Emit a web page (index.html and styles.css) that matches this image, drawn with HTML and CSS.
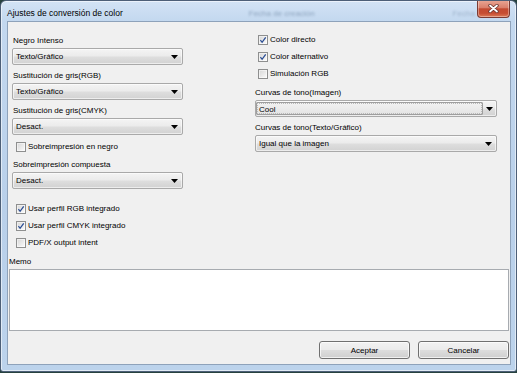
FILE: index.html
```html
<!DOCTYPE html>
<html lang="es">
<head>
    <meta charset="UTF-8">
    <title>Ajustes de conversión de color</title>
    <link rel="stylesheet" href="styles.css">
</head>
<body>
    <div class="window">
        <div class="titlebar">
            <span class="title">Ajustes de conversión de color</span>
            <span class="ghost">Fecha de creación</span>
            <span class="ghost ghost-right">Fecha</span>
            <button class="close-btn" aria-label="Cerrar">
                <svg width="11" height="9" viewBox="0 0 11 9">
                    <path d="M2 1.5 L9 7.5 M9 1.5 L2 7.5" stroke="#6b3530" stroke-width="3.4" stroke-linecap="round"/>
                    <path d="M2 1.5 L9 7.5 M9 1.5 L2 7.5" stroke="#ffffff" stroke-width="1.7" stroke-linecap="round"/>
                </svg>
            </button>
        </div>

        <div class="client">
            <div class="columns">
                <!-- Left column -->
                <div class="col-left">
                    <div class="field">
                        <span class="field-label">Negro Intenso</span>
                        <div class="select"><span class="value">Texto/Gráfico</span><svg class="arrow" width="7" height="4" viewBox="0 0 7 4"><path d="M0 0 H7 L3.5 4 Z" fill="#000"/></svg></div>
                    </div>
                    <div class="field">
                        <span class="field-label">Sustitución de gris(RGB)</span>
                        <div class="select"><span class="value">Texto/Gráfico</span><svg class="arrow" width="7" height="4" viewBox="0 0 7 4"><path d="M0 0 H7 L3.5 4 Z" fill="#000"/></svg></div>
                    </div>
                    <div class="field">
                        <span class="field-label">Sustitución de gris(CMYK)</span>
                        <div class="select"><span class="value">Desact.</span><svg class="arrow" width="7" height="4" viewBox="0 0 7 4"><path d="M0 0 H7 L3.5 4 Z" fill="#000"/></svg></div>
                    </div>
                    <div class="check overprint">
                        <span class="box"></span>Sobreimpresión en negro
                    </div>
                    <div class="field after-check">
                        <span class="field-label">Sobreimpresión compuesta</span>
                        <div class="select"><span class="value">Desact.</span><svg class="arrow" width="7" height="4" viewBox="0 0 7 4"><path d="M0 0 H7 L3.5 4 Z" fill="#000"/></svg></div>
                    </div>
                    <div class="check first-profile">
                        <span class="box checked"><svg width="8" height="8" viewBox="0 0 8 8"><path d="M1.4 4.2 L3.1 6.3 L6.7 1.4" fill="none" stroke="#2c4f95" stroke-width="1.3"/></svg></span>Usar perfil RGB integrado
                    </div>
                    <div class="check">
                        <span class="box checked"><svg width="8" height="8" viewBox="0 0 8 8"><path d="M1.4 4.2 L3.1 6.3 L6.7 1.4" fill="none" stroke="#2c4f95" stroke-width="1.3"/></svg></span>Usar perfil CMYK integrado
                    </div>
                    <div class="check">
                        <span class="box"></span>PDF/X output intent
                    </div>
                </div>

                <!-- Right column -->
                <div class="col-right">
                    <div class="check">
                        <span class="box checked"><svg width="8" height="8" viewBox="0 0 8 8"><path d="M1.4 4.2 L3.1 6.3 L6.7 1.4" fill="none" stroke="#2c4f95" stroke-width="1.3"/></svg></span>Color directo
                    </div>
                    <div class="check">
                        <span class="box checked"><svg width="8" height="8" viewBox="0 0 8 8"><path d="M1.4 4.2 L3.1 6.3 L6.7 1.4" fill="none" stroke="#2c4f95" stroke-width="1.3"/></svg></span>Color alternativo
                    </div>
                    <div class="check">
                        <span class="box"></span>Simulación RGB
                    </div>
                    <div class="field tone">
                        <span class="field-label">Curvas de tono(Imagen)</span>
                        <div class="select combo"><span class="value edit">Cool</span><svg class="arrow" width="7" height="4" viewBox="0 0 7 4"><path d="M0 0 H7 L3.5 4 Z" fill="#000"/></svg></div>
                    </div>
                    <div class="field">
                        <span class="field-label">Curvas de tono(Texto/Gráfico)</span>
                        <div class="select"><span class="value">Igual que la imagen</span><svg class="arrow" width="7" height="4" viewBox="0 0 7 4"><path d="M0 0 H7 L3.5 4 Z" fill="#000"/></svg></div>
                    </div>
                </div>
            </div>

            <div class="memo-group">
                <span class="memo-label">Memo</span>
                <div class="memo"></div>
            </div>

            <div class="actions">
                <button class="btn">Aceptar</button>
                <button class="btn">Cancelar</button>
            </div>
        </div>
    </div>
</body>
</html>
```

FILE: styles.css
```css
body {
    margin: 0;
    background-color: #27423f;
    font-family: "Liberation Sans", Arial, sans-serif;
    font-size: 8px;
    color: #000;
}
.window {
    width: 517px;
    height: 372px;
    box-sizing: border-box;
    border: 1px solid #4d5f77;
    border-radius: 6px 6px 3px 3px;
    background: linear-gradient(to bottom, #d3e3f5 0, #c3d8ef 20px, #b9d0ea 55%, #bcd3ec 100%);
    box-shadow: inset 0 0 0 1px rgba(255, 255, 255, 0.55);
    display: flex;
    flex-direction: column;
    overflow: hidden;
}
.titlebar {
    height: 20px;
    display: flex;
    align-items: flex-start;
    padding-left: 6px;
}
.title {
    font-size: 8.5px;
    line-height: 11px;
    margin-top: 7px;
    white-space: nowrap;
}
.ghost {
    font-size: 8px;
    line-height: 11px;
    margin-top: 7px;
    margin-left: 126px;
    color: #8ea5bf;
    filter: blur(0.8px);
    white-space: nowrap;
}
.ghost-right {
    margin-left: 138px;
    color: #9fb4cc;
}
.close-btn {
    flex: none;
    margin-left: auto;
    margin-right: 6px;
    margin-top: -1px;
    width: 33px;
    height: 18px;
    padding: 0;
    border: 1px solid #7b3b33;
    border-top: none;
    border-radius: 0 0 4px 4px;
    background: linear-gradient(to bottom, #eaa896 0%, #da7f6b 45%, #c34a31 52%, #c64d32 78%, #dc7a57 100%);
    box-shadow: inset 0 0 0 1px rgba(255, 255, 255, 0.35);
    display: flex;
    align-items: center;
    justify-content: center;
}
.client {
    margin: 0 5px 0 6px;
    height: 344px;
    box-sizing: border-box;
    border: 1px solid #8ea2ba;
    background-color: #f0f0f0;
    padding: 12px 0 5px 0;
    display: flex;
    flex-direction: column;
}
.columns {
    display: flex;
    align-items: flex-start;
    padding-left: 4px;
}
.col-left,
.col-right {
    display: flex;
    flex-direction: column;
}
.col-left {
    width: 171px;
}
.col-right {
    width: 242px;
    margin-left: 72px;
}
.field {
    margin-bottom: 4px;
}
.field-label {
    display: block;
    line-height: 11px;
    padding-top: 1px;
    margin-bottom: 2px;
    white-space: nowrap;
}
.col-left .field-label {
    padding-left: 1px;
}
.field.after-check {
    margin-top: 6px;
}
.field.tone {
    margin-top: 7px;
}
.select {
    height: 17px;
    box-sizing: border-box;
    border: 1px solid #a9a9a9;
    border-radius: 2px;
    background: linear-gradient(to bottom, #f4f4f4 0%, #ebebeb 48%, #dedede 52%, #d2d2d2 100%);
    box-shadow: inset 0 0 0 1px rgba(255, 255, 255, 0.6);
    display: flex;
    align-items: center;
    padding: 0 4px 0 3px;
}
.select .value {
    flex: 1;
    line-height: 11px;
    white-space: nowrap;
}
.select .arrow {
    flex: none;
    margin-top: 1px;
}
.select.combo {
    padding: 1px 3px 1px 0;
    align-items: stretch;
}
.select.combo .value.edit {
    margin-right: 3px;
    border: 1px solid #9e9e9e;
    border-radius: 1px;
    background: linear-gradient(to bottom, #f1f1f1, #e4e4e4);
    outline: 1px dotted #b9b9b9;
    outline-offset: -2px;
    padding-left: 2px;
    line-height: 13px;
}
.select.combo .arrow {
    align-self: center;
}
.check {
    display: flex;
    align-items: center;
    height: 11px;
    line-height: 11px;
    white-space: nowrap;
}
.col-left .check {
    padding-left: 4px;
}
.col-right .check {
    padding-left: 3px;
}
.check + .check {
    margin-top: 6px;
}
.check.overprint {
    margin-top: 2px;
}
.check.first-profile {
    margin-top: 10px;
}
.box {
    width: 10px;
    height: 10px;
    box-sizing: border-box;
    border: 1px solid #8e8f8f;
    background: linear-gradient(to bottom right, #d6d6d6, #fbfbfb);
    box-shadow: inset 0 0 0 1px rgba(255, 255, 255, 0.5);
    margin-right: 2px;
    display: flex;
    align-items: center;
    justify-content: center;
}
.memo-group {
    margin: 8px 1px 0;
}
.memo-label {
    display: block;
    line-height: 11px;
    margin-bottom: 2px;
}
.memo {
    height: 62px;
    box-sizing: border-box;
    border: 1px solid #a7abb0;
    background-color: #ffffff;
}
.actions {
    display: flex;
    justify-content: flex-end;
    gap: 8px;
    margin: 10px 1px 0;
}
.btn {
    width: 91px;
    height: 18px;
    padding: 0;
    border: 1px solid #707070;
    border-radius: 3px;
    background: linear-gradient(to bottom, #f2f2f2 0%, #ebebeb 48%, #dddddd 52%, #cfcfcf 100%);
    box-shadow: inset 0 0 0 1px rgba(255, 255, 255, 0.7);
    font-family: inherit;
    font-size: 8px;
    color: #000;
}
```
